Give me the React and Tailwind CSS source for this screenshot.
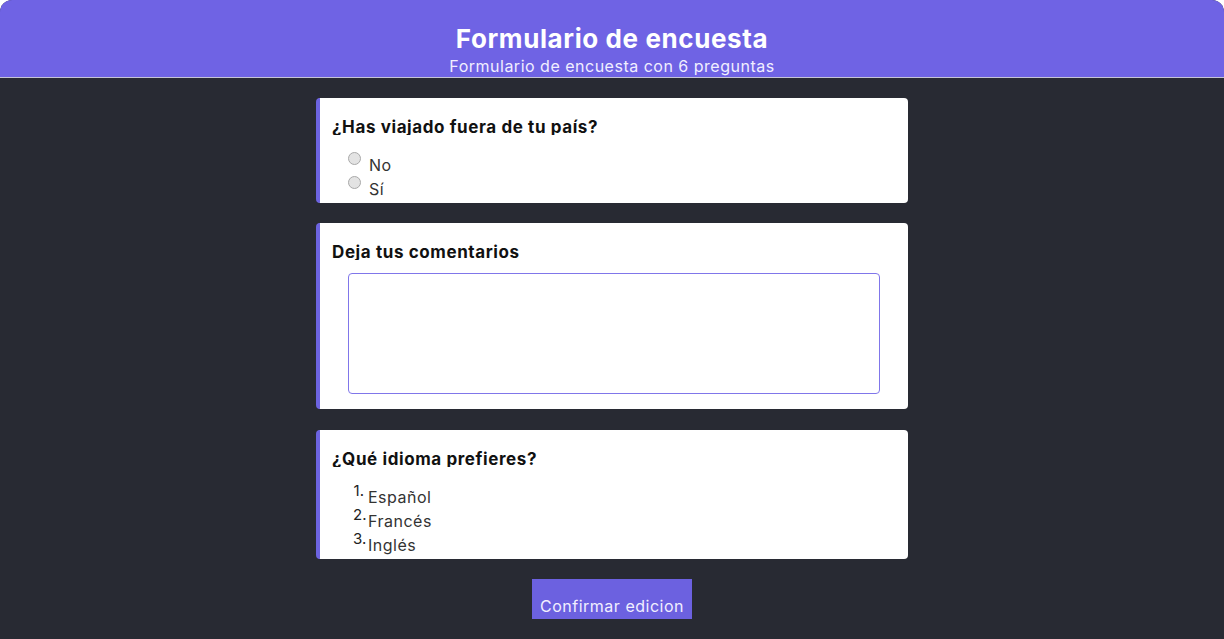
import React from "react";

function Radio({ label }) {
  return (
    <div className="flex h-6 items-start">
      <span className="mt-[2px] h-[13px] w-[13px] shrink-0 rounded-full border border-[#a9a9a9] bg-[#e3e3e3]" />
      <span className="ml-2 mt-[6px] text-[16px] leading-[18px] tracking-[0.5px] text-[#333]">{label}</span>
    </div>
  );
}

function Item({ n, label }) {
  return (
    <li className="flex h-6 items-start">
      <span className="w-[11px] text-right text-[15px] leading-[16px] text-[#222] mt-[1px]">{n}.</span>
      <span className="ml-[4px] mt-[6px] text-[16px] leading-[18px] tracking-[0.5px] text-[#333]">{label}</span>
    </li>
  );
}

function Card({ h, title, children }) {
  return (
    <section
      className={`w-[592px] overflow-hidden rounded-[4px] border-l-4 border-[#6c63e0] bg-white pl-3 pr-7 pt-[19px] ${h}`}
    >
      <h3 className="h-[18px] overflow-hidden text-[17px] font-bold leading-5 tracking-[0.6px] text-[#111]">{title}</h3>
      {children}
    </section>
  );
}

export default function App() {
  return (
    <div
      className="min-h-[639px] overflow-hidden rounded-t-xl bg-[#282a33]"
      style={{ fontFamily: "Inter, 'Liberation Sans', sans-serif" }}
    >
      <header className="h-[78px] border-b border-[#c5c4d6] bg-[#6f63e4] pt-[23px] text-center text-white">
        <h1 className="text-[26px] font-bold leading-[32px] tracking-[0.6px]">Formulario de encuesta</h1>
        <p className="mt-[2px] text-[16px] leading-[18px] tracking-[0.5px] text-[#f1efff]">Formulario de encuesta con 6 preguntas</p>
      </header>
      <main className="flex flex-col items-center pt-5 pb-5">
        <Card h="h-[105px]" title="¿Has viajado fuera de tu país?">
          <div className="ml-4 mt-[15px]">
            <Radio label="No" />
            <Radio label="Sí" />
          </div>
        </Card>
        <div className="h-5" />
        <Card h="h-[186px]" title="Deja tus comentarios">
          <div className="ml-4 mt-[13px] h-[121px] rounded-[4px] border border-[#8076ea]" />
        </Card>
        <div className="h-[21px]" />
        <Card h="h-[129px]" title="¿Qué idioma prefieres?">
          <ol className="ml-[21px] mt-[15px]">
            <Item n={1} label="Español" />
            <Item n={2} label="Francés" />
            <Item n={3} label="Inglés" />
          </ol>
        </Card>
        <div className="h-5" />
        <button className="h-10 w-40 bg-[#6c61e0] pt-[14px] text-[16px] leading-5 tracking-[0.5px] text-[#f1efff]">Confirmar edicion</button>
      </main>
    </div>
  );
}
